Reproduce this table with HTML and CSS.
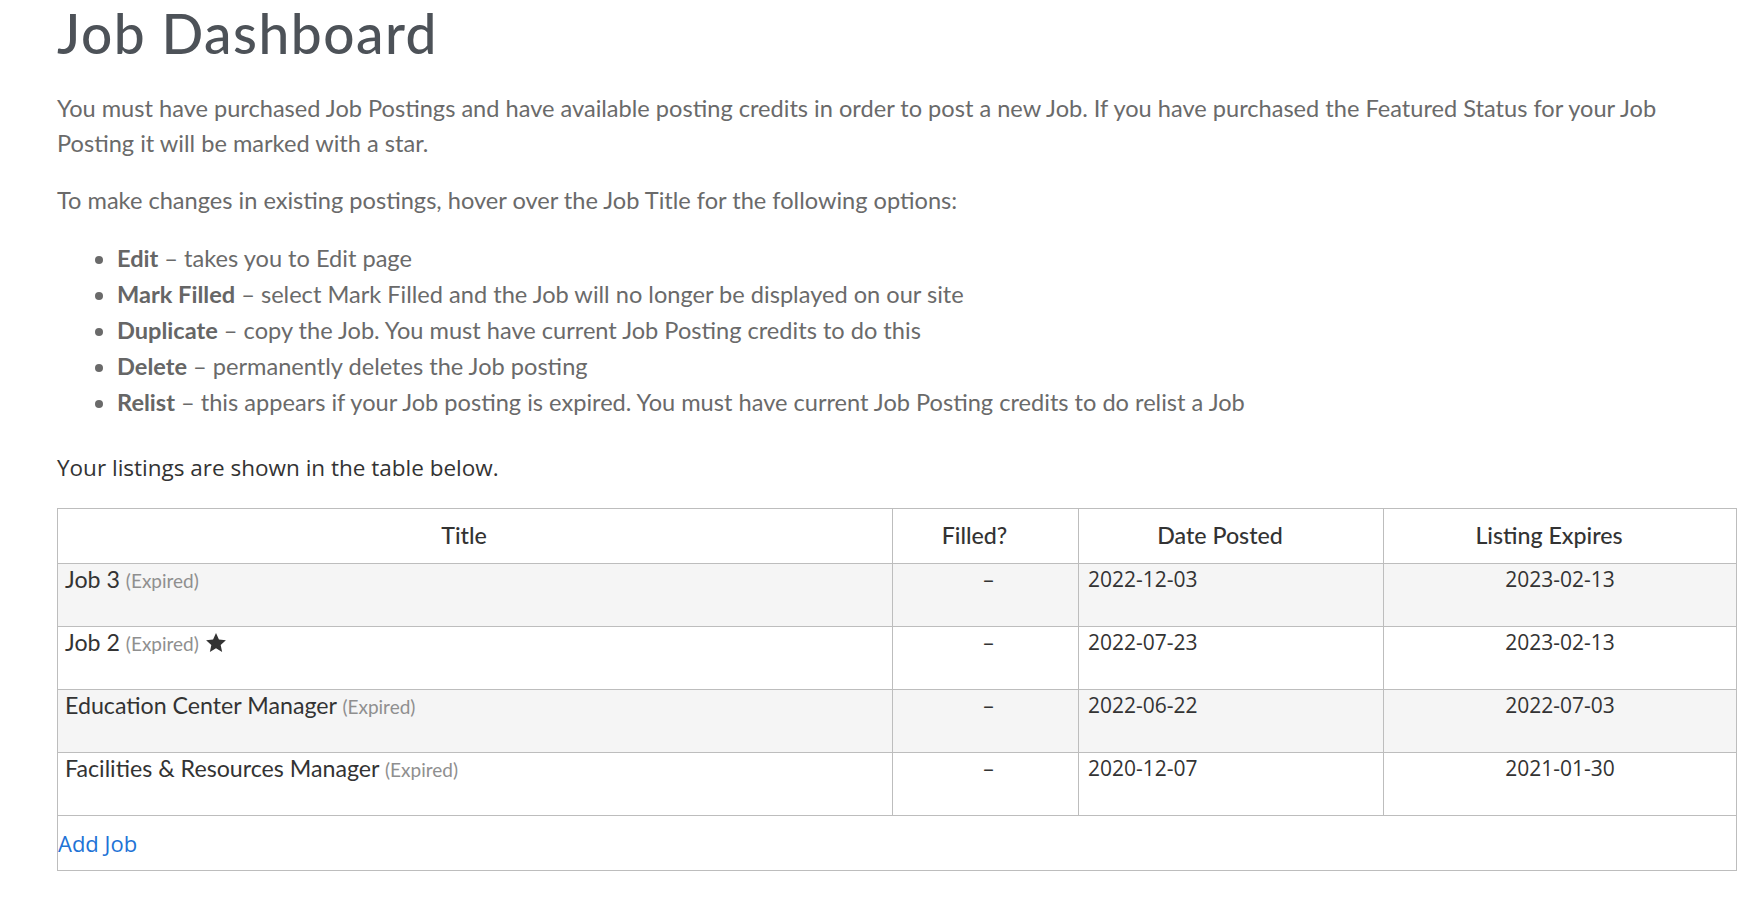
FILE: index.html
```html
<!DOCTYPE html>
<html lang="en">
<head>
<meta charset="utf-8">
<title>Job Dashboard</title>
<link rel="stylesheet" href="styles.css">
</head>
<body>
<main class="page">
  <h1 class="page-title">Job Dashboard</h1>
  <p class="intro">You must have purchased Job Postings and have available posting credits in order to post a new Job. If you have purchased the Featured Status for your Job Posting it will be marked with a star.</p>
  <p class="intro intro-second">To make changes in existing postings, hover over the Job Title for the following options:</p>
  <ul class="options">
    <li><strong>Edit</strong> – takes you to Edit page</li>
    <li><strong>Mark Filled</strong> – select Mark Filled and the Job will no longer be displayed on our site</li>
    <li><strong>Duplicate</strong> – copy the Job. You must have current Job Posting credits to do this</li>
    <li><strong>Delete</strong> – permanently deletes the Job posting</li>
    <li><strong>Relist</strong> – this appears if your Job posting is expired. You must have current Job Posting credits to do relist a Job</li>
  </ul>
  <p class="listing-note">Your listings are shown in the table below.</p>
  <table class="jobs">
    <colgroup>
      <col class="col-title">
      <col class="col-filled">
      <col class="col-date">
      <col class="col-expires">
    </colgroup>
    <thead>
      <tr>
        <th>Title</th>
        <th>Filled?</th>
        <th>Date Posted</th>
        <th>Listing Expires</th>
      </tr>
    </thead>
    <tbody>
      <tr class="odd">
        <td class="title">Job 3 <span class="status">(Expired)</span></td>
        <td class="filled">–</td>
        <td class="date">2022-12-03</td>
        <td class="expires">2023-02-13</td>
      </tr>
      <tr>
        <td class="title">Job 2 <span class="status">(Expired)</span> <svg class="star" viewBox="0 0 24 24" width="22" height="22" aria-hidden="true"><path d="M12 1.2l3.2 7 7.6.8-5.7 5.1 1.6 7.6L12 17.8l-6.7 3.9 1.6-7.6L1.2 9l7.6-.8z"/></svg></td>
        <td class="filled">–</td>
        <td class="date">2022-07-23</td>
        <td class="expires">2023-02-13</td>
      </tr>
      <tr class="odd">
        <td class="title">Education Center Manager <span class="status">(Expired)</span></td>
        <td class="filled">–</td>
        <td class="date">2022-06-22</td>
        <td class="expires">2022-07-03</td>
      </tr>
      <tr>
        <td class="title">Facilities &amp; Resources Manager <span class="status">(Expired)</span></td>
        <td class="filled">–</td>
        <td class="date">2020-12-07</td>
        <td class="expires">2021-01-30</td>
      </tr>
    </tbody>
    <tfoot>
      <tr>
        <td colspan="4" class="add-cell"><a class="add-job" href="#">Add Job</a></td>
      </tr>
    </tfoot>
  </table>
</main>
</body>
</html>
```
FILE: styles.css
```css
html, body {
  margin: 0;
  padding: 0;
  background: #ffffff;
}

.page {
  padding: 0 25px 0 57px;
  font-family: "Lato", "Open Sans", sans-serif;
}

.page-title {
  margin: 0;
  font-family: "Lato", sans-serif;
  font-weight: 500;
  font-size: 55px;
  letter-spacing: 1.5px;
  line-height: 66px;
  color: #4d5258;
}

.intro {
  margin: 25px 0 0;
  font-size: 23.6px;
  line-height: 35px;
  color: #6a6a6a;
}

.intro-second {
  margin-top: 22px;
}

.options {
  margin: 22px 0 0;
  padding-left: 60px;
  font-size: 23.6px;
  line-height: 36px;
  color: #6a6a6a;
}

.options strong {
  font-weight: 700;
  color: #666666;
}

.listing-note {
  margin: 30px 0 0;
  font-family: "Open Sans", sans-serif;
  font-size: 22.5px;
  line-height: 36px;
  color: #333333;
}

.jobs {
  margin-top: 22px;
  width: 1679px;
  border-collapse: collapse;
  table-layout: fixed;
  font-family: "Lato", sans-serif;
  color: #333333;
  border: 1px solid #bdbdbd;
}

.col-title { width: 835px; }
.col-filled { width: 186px; }
.col-date { width: 305px; }
.col-expires { width: 353px; }

.jobs th {
  height: 51px;
  padding: 0 22px 3px 0;
  font-weight: 500;
  font-size: 23.2px;
  text-align: center;
  vertical-align: middle;
  border: 1px solid #bdbdbd;
}

.jobs td {
  height: 63px;
  padding: 0 8px;
  vertical-align: top;
  border: 1px solid #bdbdbd;
  font-size: 23.2px;
  line-height: 30px;
  box-sizing: border-box;
}

.jobs tr.odd td {
  background: #f5f5f5;
}

.jobs td.title {
  padding-left: 7px;
}

.status {
  font-size: 19px;
  color: #8f8f8f;
}

.star {
  vertical-align: -3px;
  fill: #333333;
}

.jobs td.filled,
.jobs td.date,
.jobs td.expires {
  font-family: "Open Sans", sans-serif;
  font-size: 21px;
}

.jobs td.filled { text-align: center; padding-left: 14px; }
.jobs td.date { text-align: left; padding-left: 9px; }
.jobs td.expires { text-align: center; }

.jobs td.add-cell {
  height: 55px;
  padding: 0;
  vertical-align: middle;
  border: 1px solid #bdbdbd;
}

.add-job {
  font-family: "Open Sans", sans-serif;
  font-size: 22px;
  color: #1e73d6;
  text-decoration: none;
}
```
